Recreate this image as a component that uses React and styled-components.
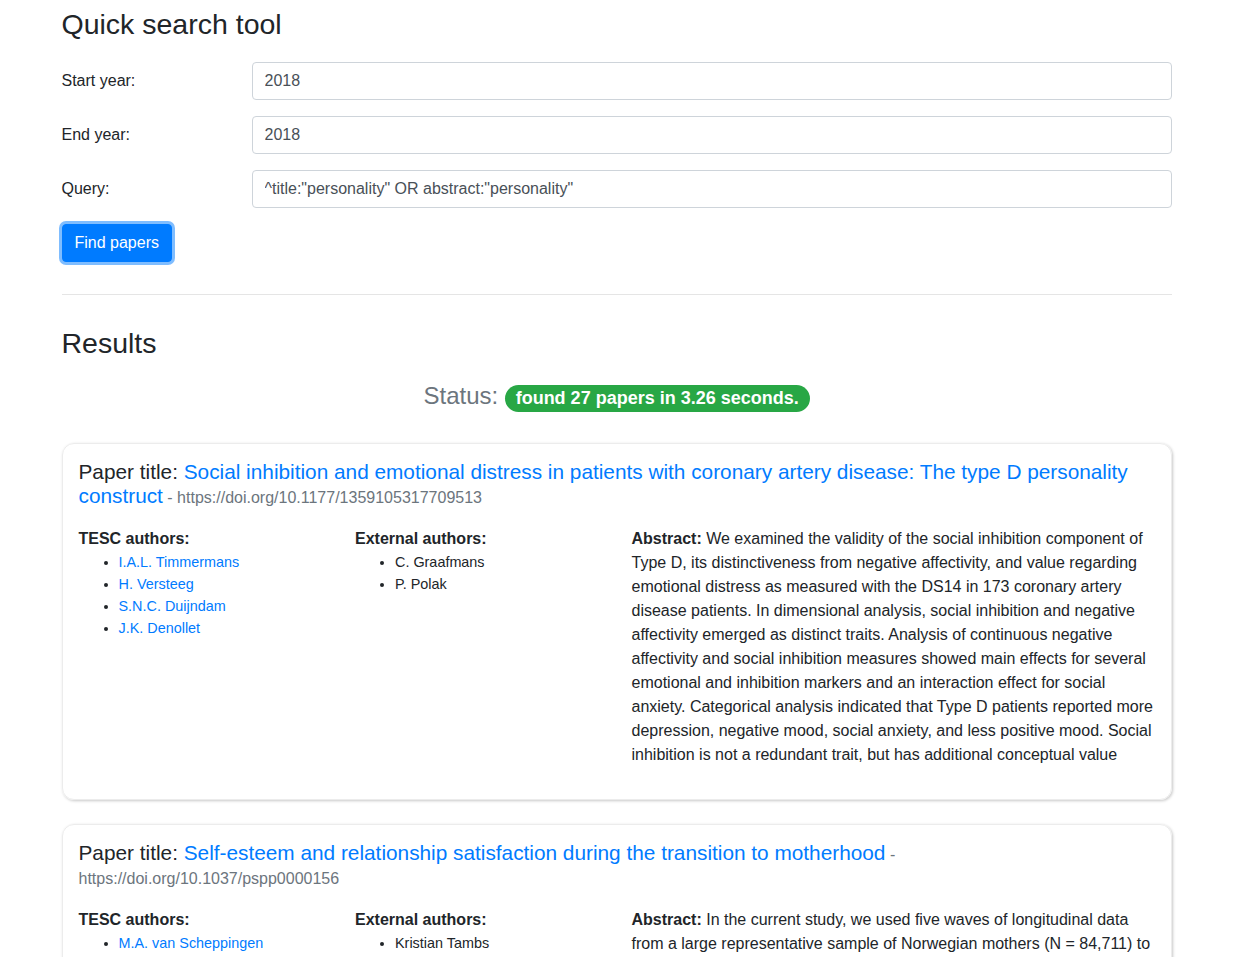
import styled, { createGlobalStyle } from "styled-components"

const GlobalStyle = createGlobalStyle`
  * { box-sizing: border-box; }
  body {
    margin: 0;
    background: #fff;
    color: #212529;
    font-family: "Liberation Sans", Arial, sans-serif;
    font-size: 16px;
    line-height: 1.5;
  }
`

const papers = [
  {
    title: "Social inhibition and emotional distress in patients with coronary artery disease: The type D personality construct",
    doi: "https://doi.org/10.1177/1359105317709513",
    tesc: ["I.A.L. Timmermans", "H. Versteeg", "S.N.C. Duijndam", "J.K. Denollet"],
    external: ["C. Graafmans", "P. Polak"],
    abstract: "We examined the validity of the social inhibition component of Type D, its distinctiveness from negative affectivity, and value regarding emotional distress as measured with the DS14 in 173 coronary artery disease patients. In dimensional analysis, social inhibition and negative affectivity emerged as distinct traits. Analysis of continuous negative affectivity and social inhibition measures showed main effects for several emotional and inhibition markers and an interaction effect for social anxiety. Categorical analysis indicated that Type D patients reported more depression, negative mood, social anxiety, and less positive mood. Social inhibition is not a redundant trait, but has additional conceptual value",
  },
  {
    title: "Self-esteem and relationship satisfaction during the transition to motherhood",
    doi: "https://doi.org/10.1037/pspp0000156",
    tesc: ["M.A. van Scheppingen", "J.J.A. Denissen", "J.M. Chung", "W. Bleidorn"],
    external: ["Kristian Tambs"],
    abstract: "In the current study, we used five waves of longitudinal data from a large representative sample of Norwegian mothers (N = 84,711) to examine the trajectories of self-esteem and relationship satisfaction during the transition to motherhood and to test whether changes in both constructs were related to each other.",
  },
]

export default function App() {
  return (
    <>
      <GlobalStyle />
      <Container>
        <PageTitle>Quick search tool</PageTitle>
        <FormRow>
          <Label>Start year:</Label>
          <Input defaultValue="2018" />
        </FormRow>
        <FormRow>
          <Label>End year:</Label>
          <Input defaultValue="2018" />
        </FormRow>
        <FormRow>
          <Label>Query:</Label>
          <Input defaultValue={'^title:"personality" OR abstract:"personality"'} />
        </FormRow>
        <Button>Find papers</Button>
        <Divider />
        <ResultsTitle>Results</ResultsTitle>
        <Status>
          Status: <Badge>found 27 papers in 3.26 seconds.</Badge>
        </Status>
        {papers.map((p) => (
          <Card key={p.doi}>
            <PaperTitle>
              Paper title: <TitleLink href="#">{p.title}</TitleLink>
              <Doi> - {p.doi}</Doi>
            </PaperTitle>
            <Columns>
              <div>
                <ColHead>TESC authors:</ColHead>
                <AuthorList>
                  {p.tesc.map((a) => (
                    <li key={a}><AuthorLink href="#">{a}</AuthorLink></li>
                  ))}
                </AuthorList>
              </div>
              <div>
                <ColHead>External authors:</ColHead>
                <AuthorList>
                  {p.external.map((a) => (
                    <li key={a}>{a}</li>
                  ))}
                </AuthorList>
              </div>
              <Abstract>
                <b>Abstract:</b> {p.abstract}
              </Abstract>
            </Columns>
          </Card>
        ))}
      </Container>
    </>
  )
}

const Container = styled.div`
  width: 1110px;
  margin: 0 auto;
  padding-top: 7px;
`

const PageTitle = styled.h3`
  margin: 0 0 21px;
  font-size: 28.5px;
  font-weight: 500;
  line-height: 34px;
`

const FormRow = styled.div`
  display: grid;
  grid-template-columns: 190px 1fr;
  margin-bottom: 16px;
`

const Label = styled.label`
  padding: 7px 0;
  font-size: 16px;
`

const Input = styled.input`
  height: 38px;
  width: 100%;
  padding: 6px 12px;
  border: 1px solid #ced4da;
  border-radius: 4px;
  font: inherit;
  color: #495057;
  outline: none;
`

const Button = styled.button`
  display: block;
  margin: 0;
  padding: 6px 12px;
  border: 1px solid #007bff;
  border-radius: 4px;
  background: #007bff;
  color: #fff;
  font: inherit;
  line-height: 1.5;
  box-shadow: 0 0 0 3px rgba(0, 123, 255, 0.5);
`

const Divider = styled.hr`
  margin: 32px 0 31px;
  border: 0;
  border-top: 1px solid rgba(0, 0, 0, 0.1);
`

const ResultsTitle = styled.h3`
  margin: 0 0 21px;
  font-size: 28.5px;
  font-weight: 500;
  line-height: 34px;
`

const Status = styled.h4`
  margin: 0 0 31px;
  text-align: center;
  font-size: 24px;
  font-weight: 500;
  line-height: 29px;
  color: #6c757d;
`

const Badge = styled.span`
  display: inline-block;
  padding: 0.25em 0.6em;
  border-radius: 10rem;
  background: #28a745;
  color: #fff;
  font-size: 75%;
  font-weight: 700;
  line-height: 1;
  vertical-align: baseline;
`

const Card = styled.div`
  margin-bottom: 24px;
  padding: 16px;
  border: 1px solid #ececec;
  border-radius: 12px;
  box-shadow: 1px 1px 3px rgba(0, 0, 0, 0.22);
`

const PaperTitle = styled.h5`
  margin: 0 0 19px;
  font-size: 20.8px;
  font-weight: 500;
  line-height: 24px;
`

const TitleLink = styled.a`
  color: #007bff;
  text-decoration: none;
`

const Doi = styled.span`
  font-size: 16px;
  font-weight: 400;
  line-height: 16px;
  color: #6c757d;
`

const Columns = styled.div`
  display: grid;
  grid-template-columns: 246.5px 246.5px 1fr;
  column-gap: 30px;
`

const ColHead = styled.div`
  font-weight: 700;
`

const AuthorList = styled.ul`
  margin: 0 0 16px;
  padding-left: 40px;
  font-size: 14.4px;
  line-height: 22px;
`

const AuthorLink = styled.a`
  color: #007bff;
  text-decoration: none;
`

const Abstract = styled.p`
  margin: 0 0 16px;
`
